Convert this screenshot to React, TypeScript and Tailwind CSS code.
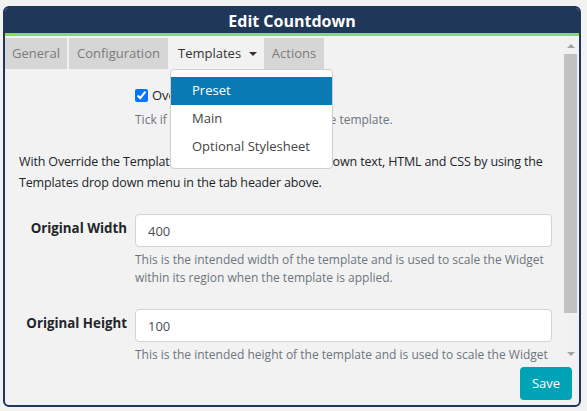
import React from 'react';

const tabs = [
  { label: 'General', w: 'w-[62px]' },
  { label: 'Configuration', w: 'w-[99px]' },
];

function Scrollbar() {
  return (
    <div className="w-[13px] shrink-0 bg-[#f1f1f1] flex flex-col">
      <div className="h-[16px] flex items-center justify-center">
        <div className="w-0 h-0 border-x-[4px] border-x-transparent border-b-[4px] border-b-[#a3a3a3]" />
      </div>
      <div className="h-[259px] bg-[#c1c1c1]" />
      <div className="flex-1" />
      <div className="h-[16px] flex items-center justify-center">
        <div className="w-0 h-0 border-x-[4px] border-x-transparent border-t-[4px] border-t-[#a3a3a3]" />
      </div>
    </div>
  );
}

function FormRow({ label, value, help }: { label: string; value: string; help: string }) {
  return (
    <div className="flex">
      <div className="w-[116px] shrink-0 pr-[8px] pt-[4px] text-right font-bold text-[13.3px] leading-[21px] text-[#212529]">
        {label}
      </div>
      <div className="flex-1 min-w-0">
        <input
          readOnly
          value={value}
          className="block w-full h-[33px] border border-[#ced4da] rounded-[4px] bg-white px-[12px] text-[13px] text-[#495057] outline-none"
        />
        <p className="mt-[4px] text-[12px] leading-[18px] text-[#6c757d]">{help}</p>
      </div>
    </div>
  );
}

export default function App() {
  return (
    <div className="w-[587px] h-[411px] bg-[#f2f2f2] pt-[6px] pl-[3px] font-['Open_Sans',sans-serif]">
      <div className="w-[578px] h-[401px] border-2 border-[#1f3759] rounded-[6px] bg-[#f2f2f2] flex flex-col overflow-hidden">
        {/* Header */}
        <div className="h-[25px] shrink-0 bg-[#1f3759] flex items-center justify-center pt-[1px] text-white font-bold text-[16px]">
          Edit Countdown
        </div>
        <div className="h-[3px] shrink-0 bg-[#8cd866]" />

        {/* Body */}
        <div className="flex flex-1 min-h-0 pt-[2px]">
          <div className="flex-1 min-w-0 overflow-hidden">
            <div className="flex gap-[2px] h-[31px]">
              {tabs.map((t) => (
                <div key={t.label} className={`${t.w} bg-[#d6d6d6] flex items-center justify-center text-[13px] text-[#7b7b7b]`}>
                  {t.label}
                </div>
              ))}
              <div className="relative w-[94px] flex items-center pl-[8px] gap-[8px] text-[13px] text-[#333]">
                Templates
                <span className="w-0 h-0 border-x-[4px] border-x-transparent border-t-[4px] border-t-[#333]" />
                <div className="absolute left-0 top-full z-10 w-[163px] bg-white border border-[#cfcfcf] rounded-[4px] py-[7px]">
                  <div className="h-[28px] flex items-center px-[21px] bg-[#0a7ab4] text-white">Preset</div>
                  <div className="h-[28px] flex items-center px-[21px] text-[#444]">Main</div>
                  <div className="h-[28px] flex items-center px-[21px] text-[#444]">Optional Stylesheet</div>
                </div>
              </div>
              <div className="w-[60px] -ml-[2px] bg-[#d6d6d6] flex items-center justify-center text-[13px] text-[#7b7b7b]">
                Actions
              </div>
            </div>

            <div className="pl-[14px] pr-[12px] pt-[16px]">
              <div className="ml-[116px] h-[21px] flex items-center gap-[4px] text-[13px] text-[#212529]">
                <input type="checkbox" defaultChecked className="m-0 w-[13px] h-[13px]" />
                <span>Override the template?</span>
              </div>
              <p className="ml-[116px] mt-[3px] text-[12px] leading-[21px] text-[#6c757d]">
                Tick if you would like to override the template.
              </p>

              <p className="mt-[21px] text-[12.5px] tracking-[-0.15px] leading-[21px] text-[#212529]">
                With Override the Template option selected enter your own text, HTML and CSS by using the
                Templates drop down menu in the tab header above.
              </p>

              <div className="mt-[21px] flex flex-col gap-[22px]">
                <FormRow
                  label="Original Width"
                  value="400"
                  help="This is the intended width of the template and is used to scale the Widget within its region when the template is applied."
                />
                <FormRow
                  label="Original Height"
                  value="100"
                  help="This is the intended height of the template and is used to scale the Widget within its region when the template is applied."
                />
              </div>
            </div>
          </div>
          <Scrollbar />
          <div className="w-[2px] shrink-0" />
        </div>

        {/* Footer */}
        <div className="h-[43px] shrink-0 flex items-center justify-end pr-[7px]">
          <button className="w-[52px] h-[33px] bg-[#00a3b5] rounded-[4px] text-white text-[13px]">Save</button>
        </div>
      </div>
    </div>
  );
}
